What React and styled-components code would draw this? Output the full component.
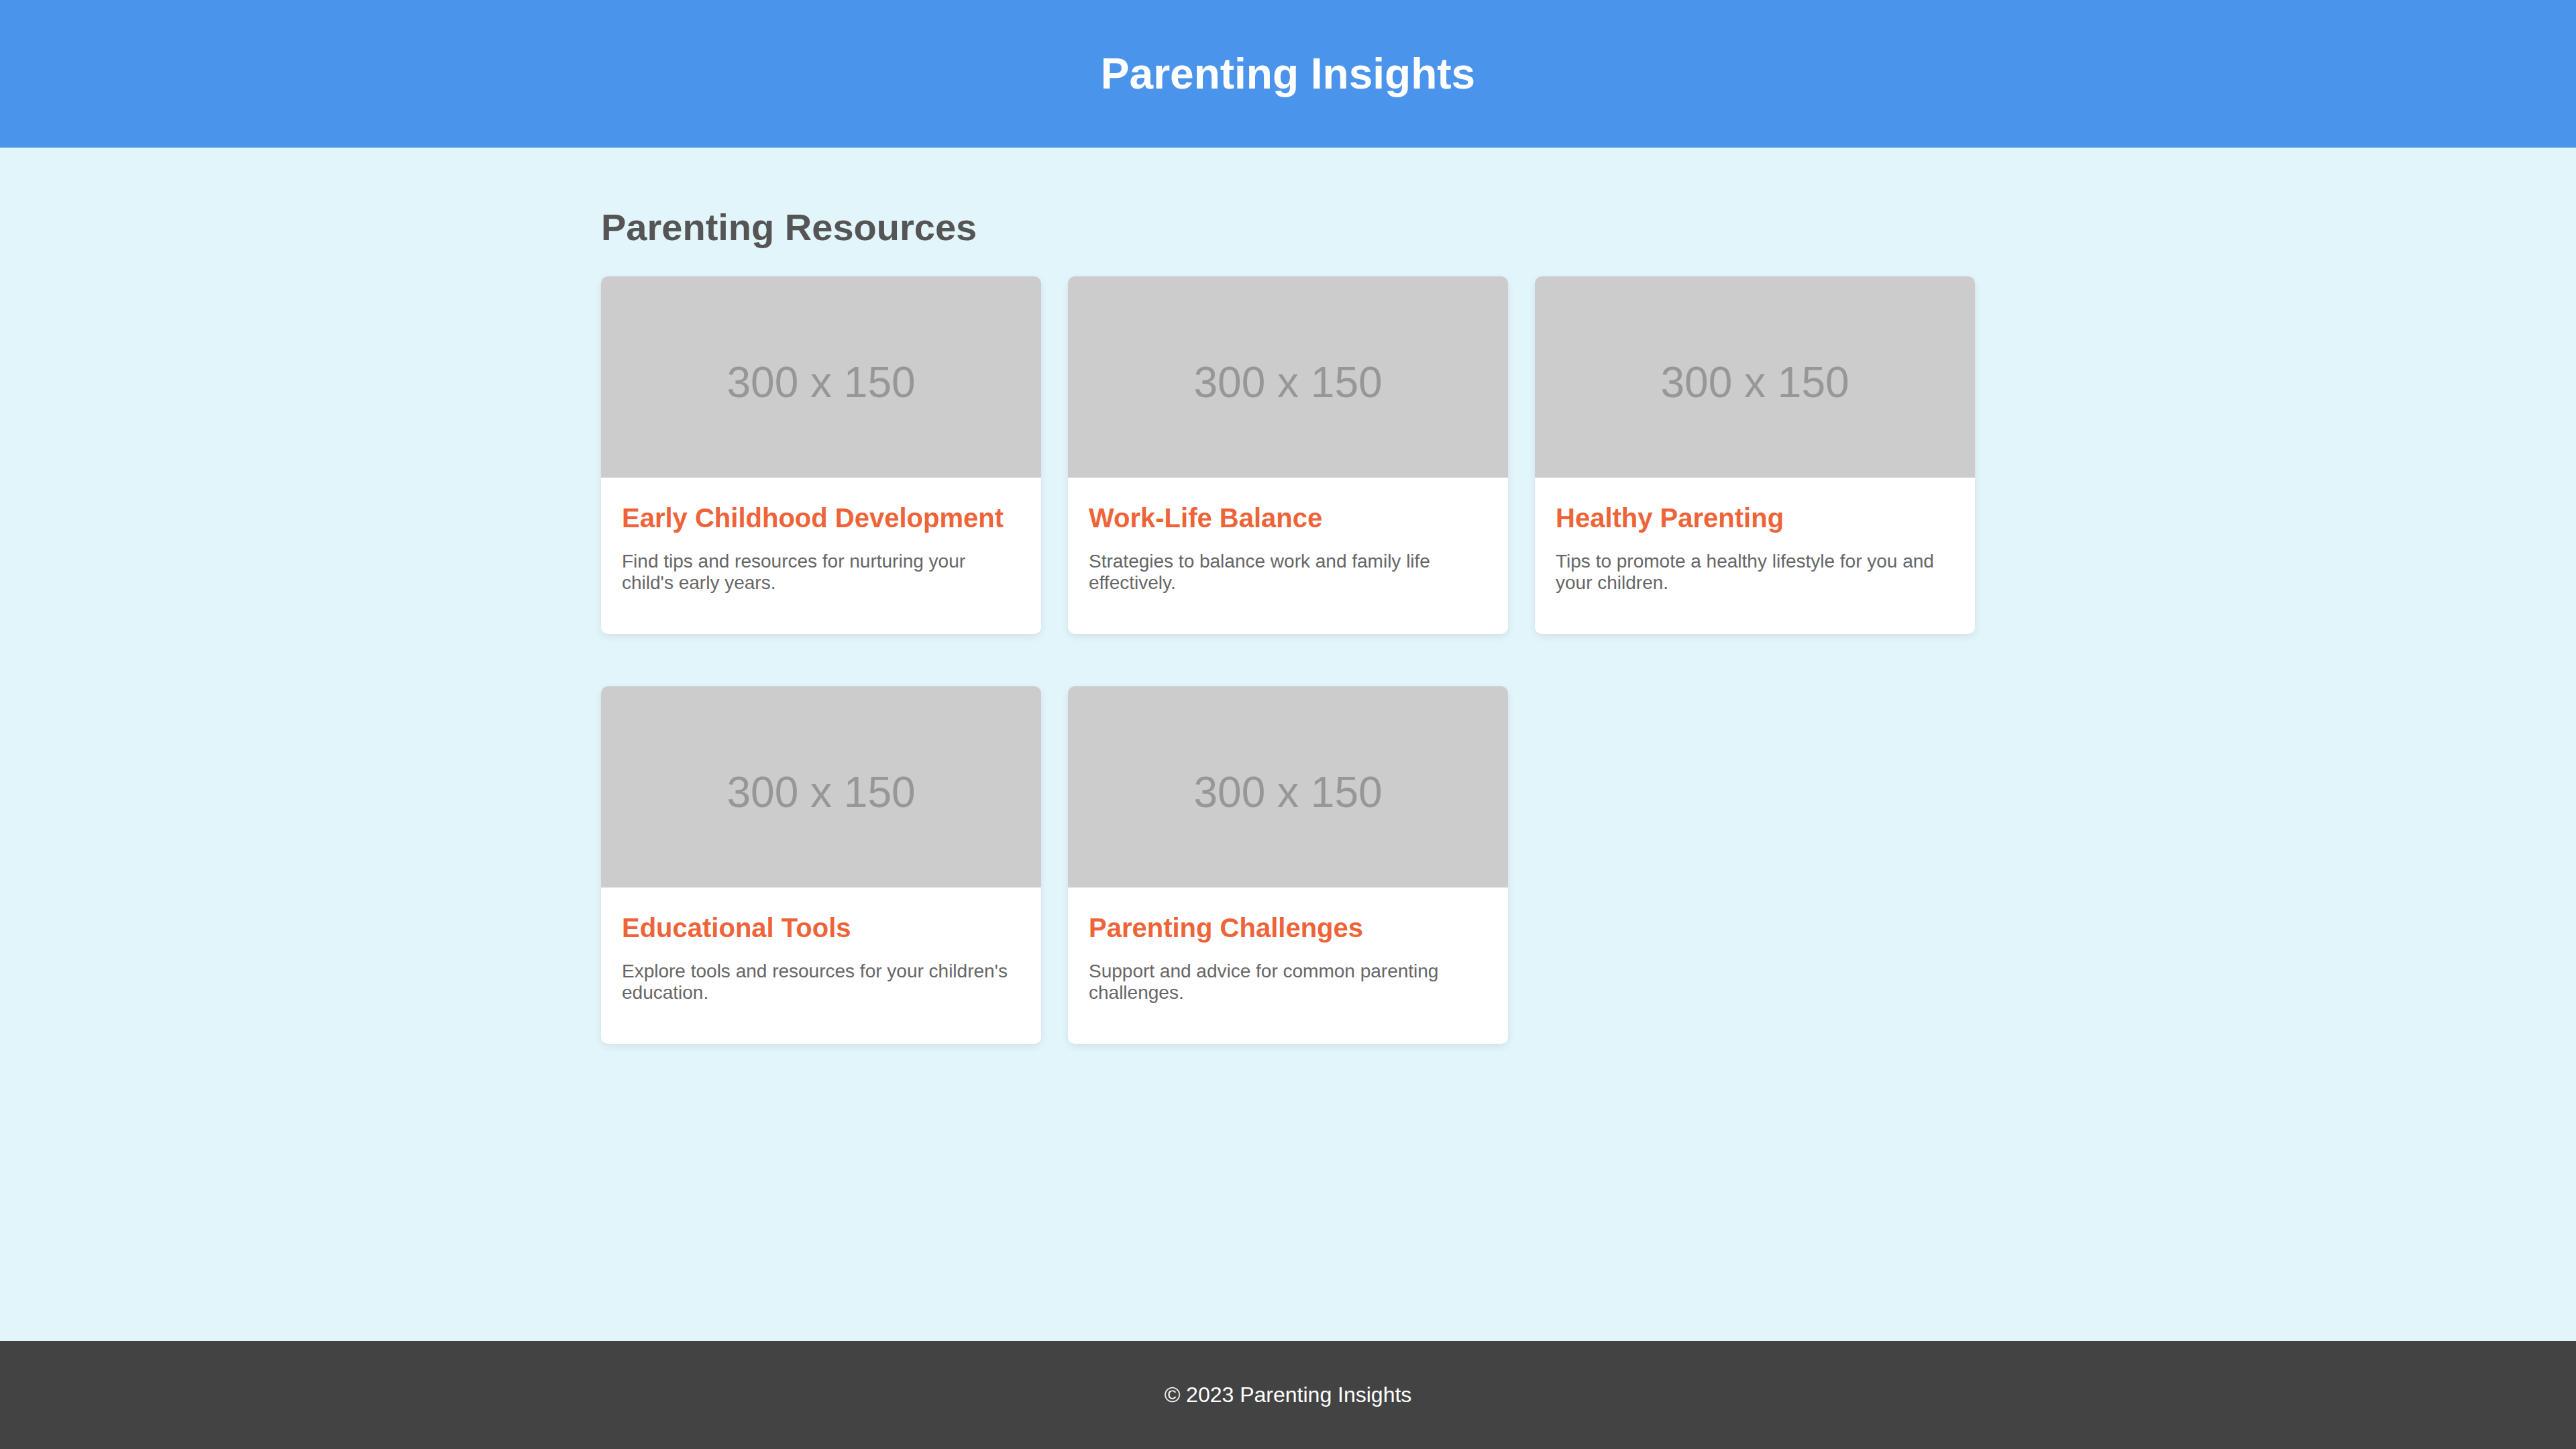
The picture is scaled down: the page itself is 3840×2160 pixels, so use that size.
import React from "react";
import styled, { createGlobalStyle } from "styled-components";

const resources = [
  {
    title: "Early Childhood Development",
    text: "Find tips and resources for nurturing your child's early years.",
  },
  {
    title: "Work-Life Balance",
    text: "Strategies to balance work and family life effectively.",
  },
  {
    title: "Healthy Parenting",
    text: "Tips to promote a healthy lifestyle for you and your children.",
  },
  {
    title: "Educational Tools",
    text: "Explore tools and resources for your children's education.",
  },
  {
    title: "Parenting Challenges",
    text: "Support and advice for common parenting challenges.",
  },
];

export default function App() {
  return (
    <>
      <GlobalStyle />
      <Page>
        <Header>
          <h1>Parenting Insights</h1>
        </Header>
        <Main>
          <Container>
            <SectionTitle>Parenting Resources</SectionTitle>
            <Grid>
              {resources.map((item) => (
                <Card key={item.title}>
                  <Placeholder>300 x 150</Placeholder>
                  <CardBody>
                    <CardTitle>{item.title}</CardTitle>
                    <CardText>{item.text}</CardText>
                  </CardBody>
                </Card>
              ))}
            </Grid>
          </Container>
        </Main>
        <Footer>
          <p>© 2023 Parenting Insights</p>
        </Footer>
      </Page>
    </>
  );
}

const GlobalStyle = createGlobalStyle`
  html, body {
    margin: 0;
    padding: 0;
  }
  body {
    font-family: "Liberation Sans", Arial, sans-serif;
    background-color: #e2f5fa;
  }
`;

const Page = styled.div`
  display: flex;
  flex-direction: column;
  min-height: 100vh;
`;

const Header = styled.header`
  background-color: #4a94ec;
  color: #fff;
  text-align: center;
  height: 220px;
  display: flex;
  align-items: center;
  justify-content: center;
  h1 {
    margin: 0;
    font-size: 64px;
    font-weight: bold;
  }
`;

const Main = styled.main`
  flex: 1;
  padding: 40px 0 60px;
`;

const Container = styled.div`
  width: 2048px;
  margin: 0 auto;
`;

const SectionTitle = styled.h2`
  font-size: 56px;
  font-weight: bold;
  color: #555;
  margin: 46px 0 41px;
`;

const Grid = styled.div`
  display: grid;
  grid-template-columns: repeat(3, 656px);
  column-gap: 40px;
  row-gap: 78px;
`;

const Card = styled.div`
  background-color: #fff;
  border-radius: 10px;
  overflow: hidden;
  box-shadow: 0 4px 12px rgba(0, 0, 0, 0.08);
`;

const Placeholder = styled.div`
  height: 300px;
  box-sizing: border-box;
  padding-top: 16px;
  background-color: #cccccc;
  color: #979797;
  font-size: 64px;
  display: flex;
  align-items: center;
  justify-content: center;
`;

const CardBody = styled.div`
  padding: 30px 34px 30px 31px;
`;

const CardTitle = styled.h3`
  margin: 8px 0 0;
  font-size: 40px;
  font-weight: bold;
  color: #ee6438;
`;

const CardText = styled.p`
  margin: 26px 0 30px;
  font-size: 28px;
  color: #666;
`;

const Footer = styled.footer`
  background-color: #434343;
  color: #fff;
  text-align: center;
  padding: 30px 0;
  p {
    margin: 32px 0;
    font-size: 32px;
  }
`;
